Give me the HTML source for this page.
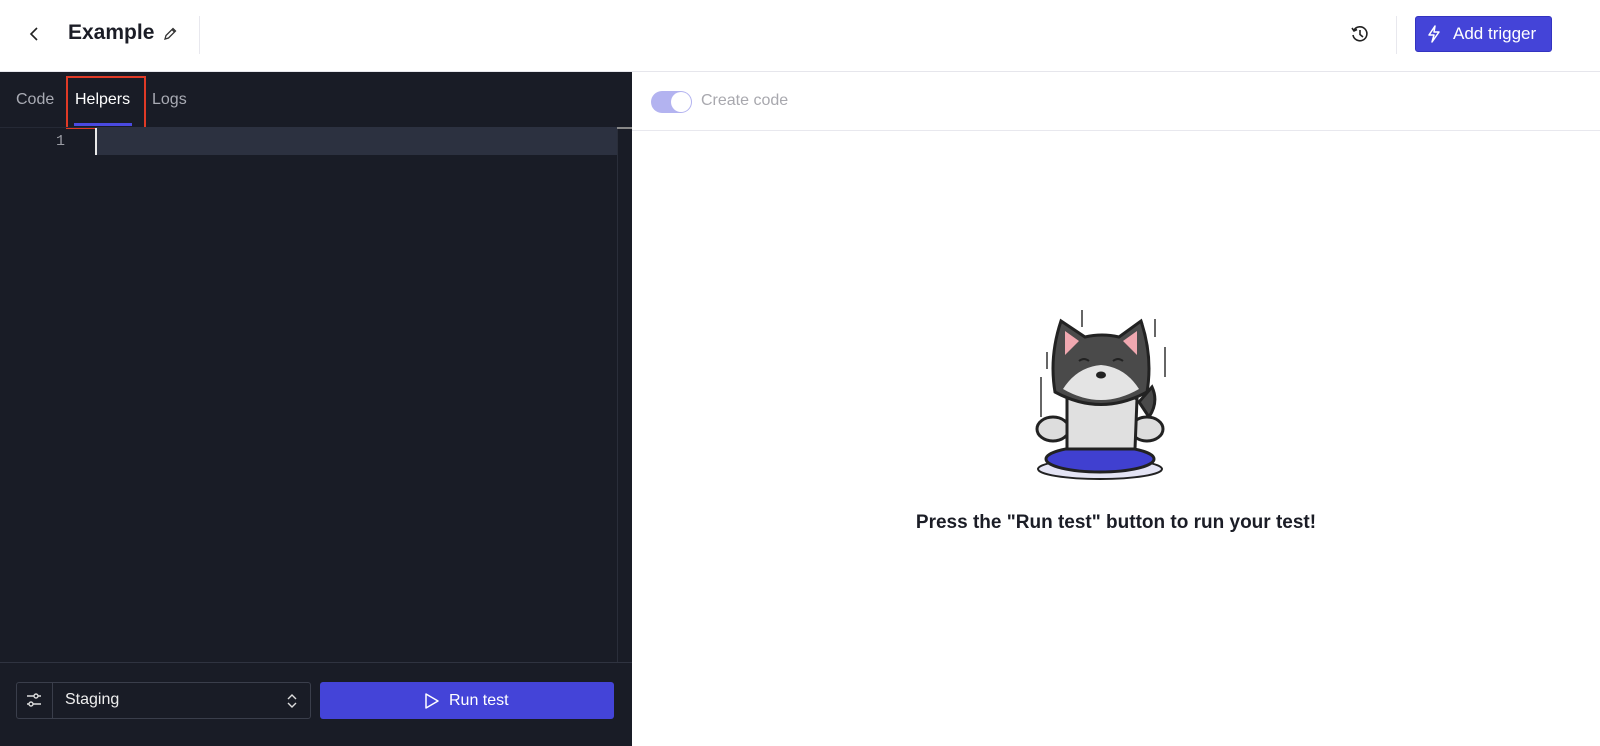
<!DOCTYPE html>
<html><head><style>
*{margin:0;padding:0;box-sizing:border-box}
body{width:1600px;height:746px;overflow:hidden;background:#fff;font-family:"Liberation Sans",sans-serif;position:relative}
.hdr{position:absolute;left:0;top:0;width:1600px;height:72px;border-bottom:1px solid #e6e6ec;background:#fff}
.left{position:absolute;left:0;top:72px;width:632px;height:674px;background:#191c26}
.right{position:absolute;left:632px;top:72px;width:968px;height:674px;background:#fff}
</style></head><body>
<div class="hdr">
 <svg style="position:absolute;left:28px;top:26px" width="14" height="16" viewBox="0 0 14 16"><path d="M9 2 L3 8 L9 14" stroke="#222" stroke-width="1.6" fill="none"/></svg>
 <div style="position:absolute;left:68px;top:21px;font-size:21px;font-weight:bold;color:#1b1d26">Example</div>
 <svg style="position:absolute;left:162px;top:26px" width="16" height="16" viewBox="0 0 16 16"><path d="M3 13 L4 9.5 L11 2.5 L13.5 5 L6.5 12 Z M10 3.5 L12.5 6" stroke="#333" stroke-width="1.3" fill="none"/></svg>
 <div style="position:absolute;left:199px;top:16px;width:1px;height:38px;background:#e8e8ee"></div>
 <svg style="position:absolute;left:1350px;top:24px" width="20" height="20" viewBox="0 0 20 20"><path d="M4 6 A7 7 0 1 1 3 11 M2 4 L4 7 L7 5.5 M10 6 V10.5 L13 13" stroke="#222" stroke-width="1.6" fill="none"/></svg>
 <div style="position:absolute;left:1396px;top:16px;width:1px;height:38px;background:#e8e8ee"></div>
 <div style="position:absolute;left:1415px;top:16px;width:137px;height:36px;background:#4444d8;border:1px solid #3333c0;border-radius:3px;color:#fff;font-size:17px;line-height:34px;padding-left:37px">Add trigger</div>
 <svg style="position:absolute;left:1427px;top:25px" width="14" height="18" viewBox="0 0 14 18"><path d="M8 1 L2 10 H7 L5 17 L12 7 H7 Z" stroke="#fff" stroke-width="1.5" fill="none" stroke-linejoin="round"/></svg>
</div>
<div class="left">
 <div style="position:absolute;left:16px;top:19px;font-size:16px;color:#a9abb4">Code</div>
 <div style="position:absolute;left:75px;top:19px;font-size:16px;color:#fff">Helpers</div>
 <div style="position:absolute;left:152px;top:19px;font-size:16px;color:#a9abb4">Logs</div>
 <div style="position:absolute;left:74px;top:51px;width:58px;height:3px;background:#4a4ae0"></div>
 <div style="position:absolute;left:66px;top:4px;width:80px;height:53px;border:2px solid #e03a26"></div>
 <div style="position:absolute;left:0;top:55px;width:632px;height:1px;background:#252935"></div>
 <div style="position:absolute;left:96px;top:55px;width:521px;height:28px;background:#2c3140"></div>
 <div style="position:absolute;left:95px;top:56px;width:2px;height:27px;background:#e8e8e8"></div>
 <div style="position:absolute;left:56px;top:61px;font-family:'Liberation Mono',monospace;font-size:15px;color:#9a9ca4">1</div>
 <div style="position:absolute;left:617px;top:55px;width:1px;height:535px;background:#2a2e3a"></div>
 <div style="position:absolute;left:617px;top:55px;width:15px;height:2px;background:#888"></div>
 <div style="position:absolute;left:0;top:590px;width:632px;height:1px;background:#2f3340"></div>
 <div style="position:absolute;left:16px;top:610px;width:295px;height:37px;border:1px solid #3a3e4b;border-radius:3px"></div>
 <div style="position:absolute;left:52px;top:610px;width:1px;height:37px;background:#3a3e4b"></div>
 <svg style="position:absolute;left:25px;top:619px" width="18" height="18" viewBox="0 0 18 18"><path d="M2 5 H16 M2 13 H16" stroke="#ddd" stroke-width="1.4"/><circle cx="11" cy="5" r="2" fill="#191c26" stroke="#ddd" stroke-width="1.4"/><circle cx="6" cy="13" r="2" fill="#191c26" stroke="#ddd" stroke-width="1.4"/></svg>
 <div style="position:absolute;left:65px;top:619px;font-size:16px;color:#eee">Staging</div>
 <svg style="position:absolute;left:286px;top:620px" width="12" height="18" viewBox="0 0 12 18"><path d="M2 7 L6 3 L10 7 M2 11 L6 15 L10 11" stroke="#ddd" stroke-width="1.4" fill="none"/></svg>
 <div style="position:absolute;left:320px;top:610px;width:294px;height:37px;background:#4444d8;border-radius:3px;color:#fff;font-size:16px;line-height:37px;padding-left:129px">Run test</div>
 <svg style="position:absolute;left:424px;top:620px" width="16" height="18" viewBox="0 0 16 18"><path d="M2 2 L14 9 L2 16 Z" stroke="#fff" stroke-width="1.5" fill="none" stroke-linejoin="round"/></svg>
</div>
<div class="right">
 <div style="position:absolute;left:19px;top:19px;width:41px;height:22px;border-radius:11px;background:#b3b3f0"></div>
 <div style="position:absolute;left:39px;top:20px;width:20px;height:20px;border-radius:10px;background:#fff"></div>
 <div style="position:absolute;left:69px;top:20px;font-size:16px;color:#a8a8ae">Create code</div>
 <div style="position:absolute;left:0;top:58px;width:968px;height:1px;background:#e8e8ee"></div>
 <svg style="position:absolute;left:395px;top:235px" width="150" height="180" viewBox="0 0 150 180">
  <path d="M55 3 V20 M128 12 V30 M20 45 V62 M138 40 V70 M14 70 V110" stroke="#333" stroke-width="1.5"/>
  <ellipse cx="73" cy="162" rx="62" ry="10" fill="#e4e4f4" stroke="#222" stroke-width="2"/>
  <ellipse cx="73" cy="152" rx="54" ry="13" fill="#4040d0" stroke="#222" stroke-width="3"/>
  <path d="M112 95 L125 80 Q132 95 122 110 Z" fill="#4a4a4a" stroke="#222" stroke-width="3"/>
  <ellipse cx="26" cy="122" rx="16" ry="12" fill="#ddd" stroke="#222" stroke-width="3"/>
  <ellipse cx="120" cy="122" rx="16" ry="12" fill="#ddd" stroke="#222" stroke-width="3"/>
  <path d="M40 142 L40 92 Q73 74 110 92 L108 142 Z" fill="#e0e0e0" stroke="#222" stroke-width="3"/>
  <path d="M28 85 Q22 50 34 14 L58 30 Q75 26 92 30 L114 14 Q126 50 120 85 Q74 110 28 85 Z" fill="#4a4a4a" stroke="#222" stroke-width="3"/>
  <path d="M38 24 L38 48 L52 34Z M110 24 L110 48 L96 34Z" fill="#f0a8b0"/>
  <path d="M36 82 Q50 60 74 58 Q98 60 112 82 Q74 104 36 82 Z" fill="#e4e4e4"/>
  <ellipse cx="74" cy="68" rx="5" ry="3.5" fill="#222"/>
  <path d="M52 54 Q57 50 62 54 M86 54 Q91 50 96 54" stroke="#222" stroke-width="2" fill="none"/>
 </svg>
 <div style="position:absolute;left:0;top:440px;width:968px;text-align:center;font-size:19px;font-weight:bold;color:#1b1d26">Press the "Run test" button to run your test!</div>
</div>
</body></html>
